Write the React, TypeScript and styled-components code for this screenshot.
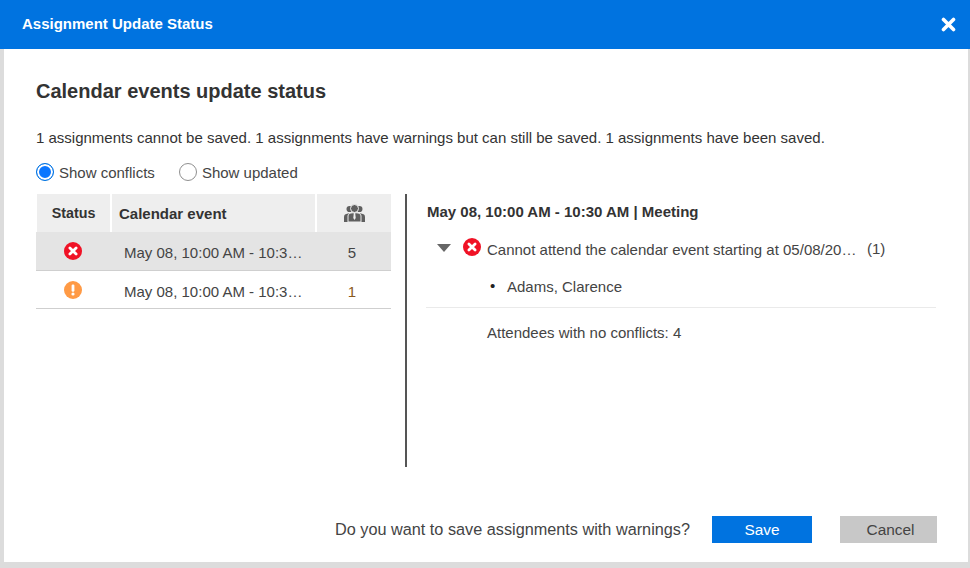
import React from "react";
import styled, { createGlobalStyle } from "styled-components";

const Global = createGlobalStyle`
  html, body { margin: 0; padding: 0; background: #dcdcdc; }
  body { font-family: "Liberation Sans", Arial, sans-serif; color: #333; }
`;

const Frame = styled.div`
  width: 970px;
  height: 568px;
  box-sizing: border-box;
  padding: 0 2px 6px 4px;
  background: #dcdcdc;
  position: relative;
  overflow: hidden;
`;
const Header = styled.header`
  margin: 0 -2px 0 -4px;
  height: 49px;
  box-sizing: border-box;
  background: #0073e0;
  color: #fff;
  display: flex;
  align-items: center;
  justify-content: space-between;
  padding: 0 14px 2px 22px;
  font-size: 15px;
  font-weight: 700;
`;
const CloseButton = styled.button`
  all: unset;
  display: flex;
  width: 15px;
  height: 15px;
  margin-top: 2px;
`;
const Body = styled.main`
  background: #fff;
  height: 513px;
  box-sizing: border-box;
  padding: 31px 32px 0 32px;
  display: flex;
  flex-direction: column;
`;
const Title = styled.h1`
  margin: 0;
  font-size: 20px;
  line-height: 23px;
  font-weight: 700;
  color: #333;
`;
const Summary = styled.p`
  margin: 27px 0 0;
  font-size: 15px;
  line-height: 16px;
  color: #333;
`;
const RadioRow = styled.div`
  display: flex;
  margin-top: 17px;
  height: 18px;
  gap: 24px;
`;
const RadioLabel = styled.label`
  display: flex;
  align-items: center;
  gap: 5px;
  font-size: 15px;
  color: #444;
`;
const RadioMark = styled.span<{ $on?: boolean }>`
  width: 18px;
  height: 18px;
  box-sizing: border-box;
  border-radius: 50%;
  border: 1px solid ${(p) => (p.$on ? "#0073e0" : "#8f8f8f")};
  background: ${(p) => (p.$on ? "#0a76ff" : "#fff")};
  box-shadow: ${(p) => (p.$on ? "inset 0 0 0 2px #fff" : "none")};
`;
const Columns = styled.div`
  display: flex;
  margin-top: 13px;
  height: 273px;
`;
const LeftPane = styled.section`
  width: 355px;
  flex: none;
`;
const Divider = styled.div`
  width: 2px;
  flex: none;
  margin-left: 14px;
  background: #555;
`;
const RightPane = styled.section`
  flex: 1;
  margin-left: 19px;
  min-width: 0;
`;
const HeadRow = styled.div`
  display: grid;
  grid-template-columns: 73px 203px 74px;
  gap: 2px;
  height: 38px;
  margin-left: 1px;
`;
const HeadCell = styled.div<{ $center?: boolean; $small?: boolean }>`
  background: #eeeeee;
  display: flex;
  align-items: center;
  justify-content: ${(p) => (p.$center ? "center" : "flex-start")};
  padding-left: ${(p) => (p.$center ? 0 : 7)}px;
  font-size: ${(p) => (p.$small ? 14.3 : 15)}px;
  font-weight: 700;
  color: #333;
`;
const Row = styled.div<{ $selected?: boolean; $h: number }>`
  display: grid;
  grid-template-columns: 75px 205px 75px;
  height: ${(p) => p.$h}px;
  box-sizing: border-box;
  align-items: center;
  background: ${(p) => (p.$selected ? "#e4e4e4" : "#fff")};
  border-bottom: 1px solid #cfcfcf;
  font-size: 15px;
  color: #444;
`;
const StatusCell = styled.div`
  display: flex;
  justify-content: center;
  margin-top: 0;
  padding-right: 1px;
`;
const EventCell = styled.div`
  padding: 3px 0 0 13px;
  white-space: nowrap;
`;
const CountCell = styled.div<{ $warn?: boolean }>`
  text-align: center;
  padding: 3px 3px 0 0;
  color: ${(p) => (p.$warn ? "#8a5a1c" : "#444")};
`;
const DetailTitle = styled.h2`
  margin: 10px 0 0 1px;
  font-size: 15px;
  line-height: 16px;
  font-weight: 700;
  color: #333;
`;
const ConflictLine = styled.div`
  display: flex;
  align-items: center;
  margin: 19px 0 0 11px;
  height: 18px;
  font-size: 15px;
  color: #444;
`;
const Caret = styled.span`
  width: 0;
  height: 0;
  border-left: 7px solid transparent;
  border-right: 7px solid transparent;
  border-top: 8px solid #666;
  margin: 0 12px 0 0;
  flex: none;
`;
const ConflictIcon = styled.span`
  display: flex;
  margin-top: -2px;
`;
const ConflictText = styled.span`
  margin-left: 6px;
  padding-top: 2px;
  width: 370px;
  white-space: nowrap;
`;
const Count = styled.span`
  margin-left: 10px;
`;
const Attendee = styled.ul`
  margin: 22px 0 0;
  padding: 0 0 12px 81px;
  list-style: none;
  border-bottom: 1px solid #eaeaea;
  font-size: 15px;
  line-height: 16px;
  color: #444;
  position: relative;
  &::before {
    content: "•";
    position: absolute;
    left: 64px;
    top: -1px;
    color: #222;
  }
`;
const NoConflicts = styled.p`
  margin: 17px 0 0 61px;
  font-size: 15px;
  line-height: 16px;
  color: #444;
`;
const Footer = styled.footer`
  display: flex;
  align-items: center;
  justify-content: flex-end;
  margin: 49px -1px 0 0;
  height: 27px;
`;
const FooterText = styled.span`
  font-size: 16.25px;
  color: #444;
  margin-right: 22px;
`;
const Button = styled.button<{ $primary?: boolean }>`
  all: unset;
  box-sizing: border-box;
  height: 27px;
  text-align: center;
  font-size: 15.4px;
  width: ${(p) => (p.$primary ? 100 : 97)}px;
  margin-left: ${(p) => (p.$primary ? 0 : 28)}px;
  padding-left: ${(p) => (p.$primary ? 0 : 4)}px;
  background: ${(p) => (p.$primary ? "#0073e0" : "#c8c8c8")};
  color: ${(p) => (p.$primary ? "#fff" : "#444")};
  line-height: 25px;
`;

const ErrorIcon = () => (
  <svg width="18" height="18" viewBox="0 0 18 18">
    <circle cx="9" cy="9" r="9" fill="#f01226" />
    <path d="M5.9 5.9 12.1 12.1M12.1 5.9 5.9 12.1" stroke="#fff" strokeWidth="2.8" strokeLinecap="round" />
  </svg>
);
const WarnIcon = () => (
  <svg width="18" height="18" viewBox="0 0 18 18">
    <circle cx="9" cy="9" r="9" fill="#ff9a45" />
    <rect x="7.6" y="3.6" width="2.8" height="7.2" rx="1.2" fill="#fff" />
    <circle cx="9" cy="13" r="1.6" fill="#fff" />
  </svg>
);
const PeopleIcon = () => (
  <svg width="21" height="19" viewBox="0 0 21 19" fill="#5f5f5f">
    <circle cx="5.6" cy="5" r="3.1" />
    <circle cx="15.4" cy="5" r="3.1" />
    <path d="M0 18v-5c0-2 1.4-3 4-3.4h13c2.6.4 4 1.4 4 3.4v5z" />
    <circle cx="10.5" cy="4.5" r="4" stroke="#eee" strokeWidth="1" />
    <path d="M4 18v-6c0-2 1.6-2.7 4-3.2h5c2.4.5 4 1.2 4 3.2v6z" stroke="#eee" strokeWidth="1" />
    <path d="M9.8 9h1.4l.5 5-1.2 2-1.2-2z" fill="#eee" />
  </svg>
);

export default function App() {
  return (
    <>
      <Global />
      <Frame>
        <Header>
          <span>Assignment Update Status</span>
          <CloseButton aria-label="Close">
            <svg width="15" height="15" viewBox="0 0 15 15">
              <path d="M2.5 2.5 12.5 12.5M12.5 2.5 2.5 12.5" stroke="#fff" strokeWidth="3.6" strokeLinecap="round" />
            </svg>
          </CloseButton>
        </Header>
        <Body>
          <Title>Calendar events update status</Title>
          <Summary>
            1 assignments cannot be saved. 1 assignments have warnings but can still be saved. 1 assignments have been saved.
          </Summary>
          <RadioRow>
            <RadioLabel>
              <RadioMark $on />
              Show conflicts
            </RadioLabel>
            <RadioLabel>
              <RadioMark />
              Show updated
            </RadioLabel>
          </RadioRow>
          <Columns>
            <LeftPane>
              <HeadRow>
                <HeadCell $center $small>Status</HeadCell>
                <HeadCell>Calendar event</HeadCell>
                <HeadCell $center>
                  <PeopleIcon />
                </HeadCell>
              </HeadRow>
              <Row $selected $h={39}>
                <StatusCell>
                  <ErrorIcon />
                </StatusCell>
                <EventCell>May 08, 10:00 AM - 10:3…</EventCell>
                <CountCell>5</CountCell>
              </Row>
              <Row $h={38}>
                <StatusCell>
                  <WarnIcon />
                </StatusCell>
                <EventCell>May 08, 10:00 AM - 10:3…</EventCell>
                <CountCell $warn>1</CountCell>
              </Row>
            </LeftPane>
            <Divider />
            <RightPane>
              <DetailTitle>May 08, 10:00 AM - 10:30 AM | Meeting</DetailTitle>
              <ConflictLine>
                <Caret />
                <ConflictIcon>
                  <ErrorIcon />
                </ConflictIcon>
                <ConflictText>Cannot attend the calendar event starting at 05/08/20…</ConflictText>
                <Count>(1)</Count>
              </ConflictLine>
              <Attendee>
                <li>Adams, Clarence</li>
              </Attendee>
              <NoConflicts>Attendees with no conflicts: 4</NoConflicts>
            </RightPane>
          </Columns>
          <Footer>
            <FooterText>Do you want to save assignments with warnings?</FooterText>
            <Button $primary>Save</Button>
            <Button>Cancel</Button>
          </Footer>
        </Body>
      </Frame>
    </>
  );
}
